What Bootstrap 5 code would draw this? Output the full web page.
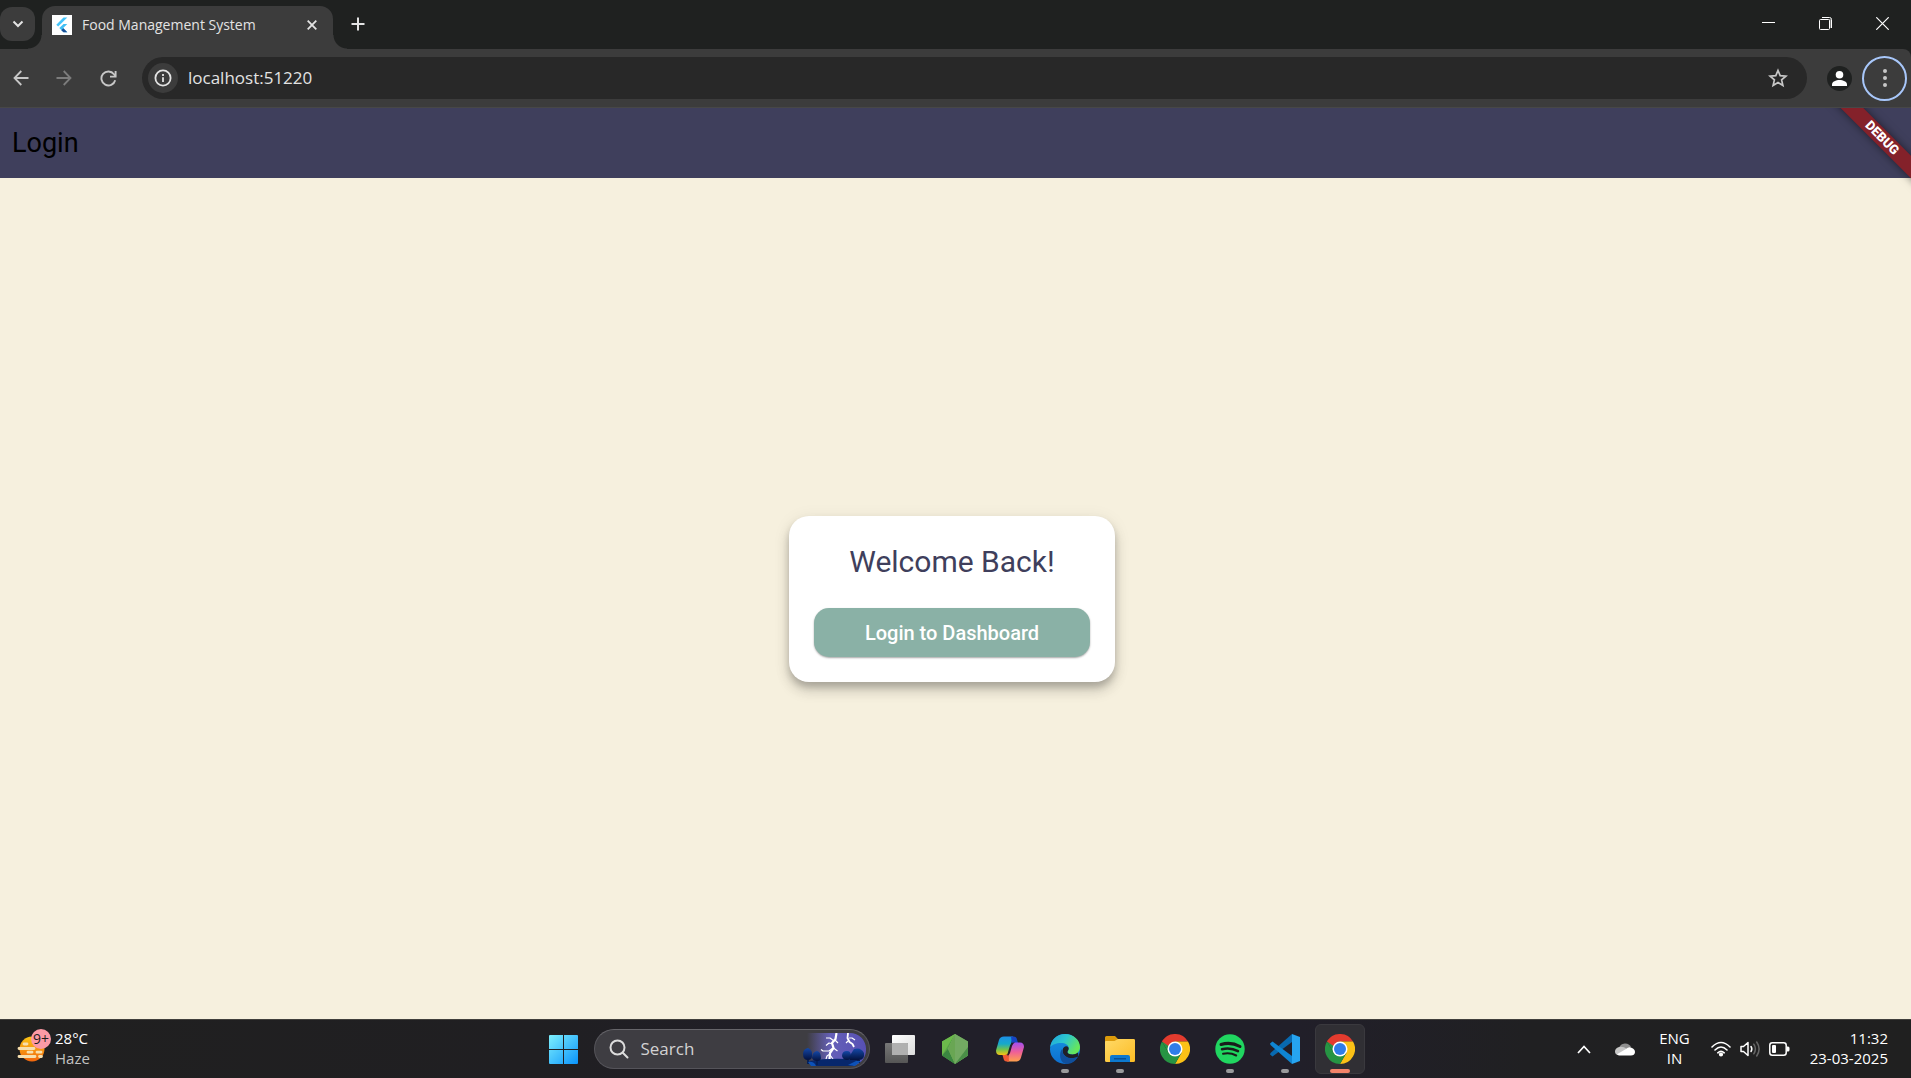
<!DOCTYPE html>
<html lang="en">
<head>
<meta charset="utf-8">
<meta name="viewport" content="width=device-width, initial-scale=1">
<title>Food Management System</title>
<link rel="stylesheet" href="https://cdn.jsdelivr.net/npm/bootstrap@5.3.0/dist/css/bootstrap.min.css">
<style>
  :root { --ui: "Open Sans", "Noto Sans", sans-serif; --chrome: #3c3c3c; --strip: #1f2120; --cream: #f6f0de; --navy: #3f3f5c; }
  body { font-family: var(--ui); background: var(--cream); overflow: hidden; }
  button { color: inherit; }
  svg { display: block; flex: none; }
  .plain-btn { background: none; border: 0; padding: 0; display: flex; align-items: center; justify-content: center; flex: none; }

  /* browser window */
  .tab-strip { background: var(--strip); height: 49px; color: #e3e3e3; }
  .tab-search { width: 35px; height: 34px; margin-top: 7px; border-radius: 12px; background: var(--chrome); }
  .page-tab { position: relative; width: 291px; height: 43px; margin: 6px 0 0 7px; padding: 0 12px 6px 10px; background: var(--chrome); border-radius: 13px 13px 0 0; font-size: 14px; line-height: 20px; }
  .page-tab::before, .page-tab::after { content: ""; position: absolute; bottom: 0; width: 14px; height: 14px; }
  .page-tab::before { right: 100%; background: radial-gradient(circle at 0 0, transparent 13px, var(--chrome) 14px); }
  .page-tab::after { left: 100%; background: radial-gradient(circle at 100% 0, transparent 13px, var(--chrome) 14px); }
  .tab-icon { width: 20px; height: 20px; background: #fff; }
  .tab-title { margin-left: 10px; }
  .new-tab { width: 34px; height: 34px; margin: 7px 0 0 8px; }
  .win-btn { width: 57px; height: 47px; color: #fff; }
  .toolbar-row { background: var(--chrome); height: 59px; padding: 0 4px 0 0; border-bottom: 1px solid #474747; border-top-right-radius: 8px; color: #c7c7c7; }
  .strip-under { background: var(--strip); }
  .nav-btn { width: 45px; height: 40px; }
  .nav-btn:first-child { width: 41px; }
  .omnibox { height: 42px; margin-left: 11px; border-radius: 21px; background: #282828; padding: 0 15px 0 6px; }
  .site-info { width: 30px; height: 30px; border-radius: 50%; background: var(--chrome); color: #e3e3e3; }
  .bare-input { background: none; border: 0; padding: 0; outline: 0; min-width: 0; }
  .address-text { color: #e3e3e3; font-size: 17px; line-height: 24px; margin-left: 10px; }
  .profile-btn { margin: 0 10px 0 20px; }
  .menu-ring { width: 45px; height: 45px; border: 2px solid #a8c7fa; border-radius: 50%; }

  /* page content */
  .app-view { font-family: Roboto, sans-serif; background: var(--cream); }
  .app-bar { height: 70px; padding: 0 12px; background: var(--navy); color: #000; font-size: 27px; line-height: 36px; }
  .ribbon-clip { position: absolute; top: 0; right: 0; width: 86px; height: 86px; overflow: hidden; pointer-events: none; }
  .ribbon-band { position: absolute; left: -13px; top: 22px; width: 140px; height: 16px; transform: rotate(45deg); background: #84212a; color: #fff; font-size: 13px; line-height: 16px; font-weight: 900; text-align: center; box-shadow: 0 0 8px rgba(0,0,0,.5); }
  .login-area { padding-right: 7px; }
  .login-card { padding: 25px; border: 0; border-radius: 20px; box-shadow: 0 5px 6px rgba(0,0,0,.16), 0 9px 14px rgba(0,0,0,.14), 0 3px 18px rgba(0,0,0,.08); }
  .login-title { color: var(--navy); font-size: 30px; line-height: 42px; font-weight: 400; margin-bottom: 25px; }
  .login-btn { width: 276px; height: 49px; border: 0; border-radius: 15px; background: #8ab1a6; color: #fff; font-size: 20px; line-height: 28px; font-weight: 500; padding: 1px 0 0; box-shadow: 0 1px 2px rgba(0,0,0,.35); }
  .login-btn:hover { background: #7ba397; color: #fff; }

  /* taskbar */
  .task-bar { height: 59px; border-top: 1px solid #403f3c; padding: 0 2px 0 15px; color: #fff; font-size: 15px; line-height: 20px; background: linear-gradient(90deg, #202020 0, #201f22 28%, #211f29 45%, #211f29 68%, #202022 80%, #202020 100%); }
  .side-zone { flex: 1 1 0; }
  .two-line { padding-bottom: 2px; }
  .weather-text { color: #c3c3c3; }
  .task-search { width: 276px; height: 40px; border: 1px solid #55545a; border-top-color: #66656a; border-radius: 20px; background: #3e3d42; padding: 0 3px 0 14px; }
  .task-search input { color: #d2d2d2; font-size: 17px; line-height: 24px; width: 120px; margin-left: 12px; }
  .task-search input::placeholder { color: #d2d2d2; opacity: 1; }
  .dock { gap: 5px; }
  .dock-btn { position: relative; width: 50px; height: 50px; border-radius: 6px; }
  .dock-btn.running::after { content: ""; position: absolute; left: 21px; bottom: 1px; width: 8px; height: 4px; border-radius: 2px; background: #9a9a9c; }
  .dock-btn.current { background: #302f34; border: 1px solid #3a393e; }
  .dock-btn.current::after { left: 14px; bottom: 0; width: 20px; background: #f3836a; }
  .tray { padding-right: 21px; }
  .tray-status { margin-left: 21px; gap: 8px; }
</style>
<script src="https://cdn.jsdelivr.net/npm/bootstrap@5.3.0/dist/js/bootstrap.bundle.min.js"></script>
</head>
<body class="d-flex flex-column vh-100">

<svg width="0" height="0" class="position-absolute" aria-hidden="true">
  <defs>
    <linearGradient id="gWin" x1="0" y1="0" x2="1" y2="1"><stop offset="0" stop-color="#7ef0fd"/><stop offset="1" stop-color="#0a93fb"/></linearGradient>
    <linearGradient id="gSun" x1="0" y1="0" x2="0" y2="1"><stop offset="0" stop-color="#fbc515"/><stop offset="1" stop-color="#f2660c"/></linearGradient>
    <linearGradient id="gSky" x1="0" y1="0" x2="1" y2="0"><stop offset="0" stop-color="#6963bd" stop-opacity="0"/><stop offset=".4" stop-color="#6560b8"/><stop offset="1" stop-color="#5750b4"/></linearGradient>
    <linearGradient id="gTree" x1="0" y1="0" x2="0" y2="1"><stop offset="0" stop-color="#1448a8"/><stop offset="1" stop-color="#04123f"/></linearGradient>
    <linearGradient id="gPane" x1="0" y1="0" x2="1" y2="1"><stop offset="0" stop-color="#fff"/><stop offset="1" stop-color="#dcdcdc"/></linearGradient>
    <linearGradient id="gGray" x1="0" y1="0" x2="0" y2="1"><stop offset="0" stop-color="#777"/><stop offset="1" stop-color="#565656"/></linearGradient>
    <linearGradient id="gCopA" x1="0" y1="0" x2="0" y2="1"><stop offset="0" stop-color="#1c8fe8"/><stop offset=".4" stop-color="#16a9c9"/><stop offset=".7" stop-color="#71c24c"/><stop offset="1" stop-color="#f7c414"/></linearGradient>
    <linearGradient id="gCopB" x1="0" y1="0" x2="0" y2="1"><stop offset="0" stop-color="#a24ef0"/><stop offset=".5" stop-color="#ef5f98"/><stop offset="1" stop-color="#ffa04c"/></linearGradient>
    <linearGradient id="gEdgeTop" x1="0" y1="0" x2="1" y2=".5"><stop offset="0" stop-color="#1fa2dc"/><stop offset=".5" stop-color="#2cc6cf"/><stop offset="1" stop-color="#66e65c"/></linearGradient>
    <linearGradient id="gEdgeLow" x1="0" y1="0" x2="0" y2="1"><stop offset="0" stop-color="#1793e0"/><stop offset="1" stop-color="#0d6fd0"/></linearGradient>
    <linearGradient id="gFold" x1="0" y1="0" x2="1" y2="1"><stop offset="0" stop-color="#ffd967"/><stop offset="1" stop-color="#fcbc24"/></linearGradient>
    <symbol id="chromeLogo" viewBox="0 0 30 30">
      <path d="M2 7.5A15 15 0 0 1 28 7.5H15z" fill="#e33b2e"/>
      <path d="M28 7.5A15 15 0 0 1 15 30L21.5 18.8 15 7.5z" fill="#fbc116"/>
      <path d="M15 30A15 15 0 0 1 2 7.5L8.5 18.8 15 22.5 21.5 18.8z" fill="#269443"/>
      <path d="M2 7.5L8.5 18.8 15 7.5z" fill="#269443"/>
      <path d="M2 7.5A15 15 0 0 1 4 5L15 7.5 8.5 12z" fill="#e33b2e"/>
      <circle cx="15" cy="15" r="7.5" fill="#fff"/><circle cx="15" cy="15" r="6" fill="#2f7de9"/>
    </symbol>
  </defs>
</svg>

<header>
  <div class="tab-strip d-flex align-items-start">
    <button class="plain-btn tab-search" aria-label="Search tabs"><svg width="12" height="8" viewBox="0 0 12 8" fill="none" stroke="currentColor" stroke-width="2"><path d="M1.5 1.5L6 6l4.500-4.500"/></svg></button>
    <div class="page-tab d-flex align-items-center">
      <span class="tab-icon"><svg width="20" height="20" viewBox="0 0 20 20"><path d="M11.500 2.500h3.800L6.200 11.600 4.300 9.700z" fill="#45c5fb"/><path d="M11.500 9h3.800l-4.100 4.100 4.100 4.200h-3.800l-4.200-4.200z" fill="#40bff5"/><path d="M9.300 15.200l2-2 4 4.100h-3.800z" fill="#1a4f97"/></svg></span>
      <span class="tab-title me-auto text-nowrap">Food Management System</span>
      <button class="plain-btn p-1" aria-label="Close tab"><svg width="10" height="10" viewBox="0 0 10 10" stroke="currentColor" stroke-width="1.800"><path d="M.7.7l8.600 8.600M9.300.7L.7 9.300"/></svg></button>
    </div>
    <button class="plain-btn new-tab" aria-label="New tab"><svg width="14" height="14" viewBox="0 0 14 14" stroke="currentColor" stroke-width="2"><path d="M7 .5v13M.5 7h13"/></svg></button>
    <div class="ms-auto d-flex">
      <button class="plain-btn win-btn" aria-label="Minimize"><svg width="13" height="13" viewBox="0 0 13 13"><path d="M0 5h13v1H0z" fill="currentColor"/></svg></button>
      <button class="plain-btn win-btn" aria-label="Restore"><svg width="13" height="13" viewBox="0 0 13 13" fill="none" stroke="currentColor"><path d="M3 .5h7.500a2 2 0 0 1 2 2V11"/><path d="M11 2v9" stroke="#999" stroke-width="1.500"/><rect x=".5" y="2.500" width="10" height="10" rx="1"/></svg></button>
      <button class="plain-btn win-btn" aria-label="Close"><svg width="13" height="13" viewBox="0 0 13 13" stroke="currentColor" stroke-width="1.200"><path d="M.3.3l12.400 12.400M12.700.3L.3 12.700"/></svg></button>
    </div>
  </div>
  <div class="strip-under">
    <nav class="toolbar-row d-flex align-items-center" aria-label="Browser">
      <button class="plain-btn nav-btn" aria-label="Back"><svg width="16" height="16" viewBox="0 0 16 16" fill="none" stroke="currentColor" stroke-width="1.800"><path d="M15.500 8H1.800M8.300 1L1.500 8l6.800 7"/></svg></button>
      <button class="plain-btn nav-btn" aria-label="Forward"><svg width="16" height="16" viewBox="0 0 16 16" fill="none" stroke="#7c7c7c" stroke-width="1.800"><path d="M.5 8h13.700M7.700 1l6.800 7-6.800 7"/></svg></button>
      <button class="plain-btn nav-btn" aria-label="Reload"><svg width="17" height="17" viewBox="0 0 17 17" fill="none" stroke="currentColor" stroke-width="1.900"><path d="M15.200 10.200A7 7 0 1 1 14 4.200l1.500 2"/><path d="M15.600 1v5.600H10"/></svg></button>
      <div class="omnibox d-flex align-items-center flex-grow-1">
        <button class="plain-btn site-info" aria-label="View site information"><svg width="18" height="18" viewBox="0 0 18 18" fill="none" stroke="currentColor" stroke-width="1.800"><circle cx="9" cy="9" r="7.600"/><path d="M9 8.200V13M9 5v2"/></svg></button>
        <input class="bare-input address-text flex-grow-1" type="text" value="localhost:51220" aria-label="Address" spellcheck="false">
        <button class="plain-btn p-1" aria-label="Bookmark this tab"><svg width="20" height="20" viewBox="0 0 20 20" fill="none" stroke="currentColor" stroke-width="1.700"><path d="M10 2.500l2.200 5.200 5.700.5-4.300 3.700 1.300 5.500L10 14.500l-4.900 2.900 1.300-5.500-4.300-3.700 5.700-.5z"/></svg></button>
      </div>
      <button class="plain-btn profile-btn" aria-label="Profile"><svg width="25" height="25" viewBox="0 0 25 25"><circle cx="12.500" cy="12.500" r="12.500" fill="#1f2120"/><circle cx="12.500" cy="8.800" r="3.800" fill="#fff"/><path d="M5 20v-1.500c0-3 4-4.500 7.500-4.500s7.500 1.500 7.500 4.500V20z" fill="#fff"/></svg></button>
      <button class="plain-btn menu-ring" aria-label="Menu"><svg width="4" height="18" viewBox="0 0 4 18" fill="currentColor"><circle cx="2" cy="2" r="2"/><circle cx="2" cy="9" r="2"/><circle cx="2" cy="16" r="2"/></svg></button>
    </nav>
  </div>
</header>

<div class="app-view position-relative flex-grow-1 d-flex flex-column">
  <div class="app-bar d-flex align-items-center">Login</div>
  <main class="login-area flex-grow-1 d-flex align-items-center justify-content-center">
    <section class="card login-card">
      <h1 class="login-title text-center">Welcome Back!</h1>
      <button class="btn login-btn" type="button">Login to Dashboard</button>
    </section>
  </main>
  <div class="ribbon-clip"><div class="ribbon-band">DEBUG</div></div>
</div>

<footer class="task-bar d-flex align-items-center">
  <div class="side-zone d-flex align-items-center">
    <svg width="36" height="36" viewBox="0 0 36 36" class="mb-2">
      <circle cx="17" cy="22" r="12.500" fill="url(#gSun)"/>
      <g stroke="#f7dfae" stroke-width="2.800" stroke-linecap="round"><path d="M9 17h3M4 21.500h15M13 25.200h4M22 25.200h4M4 29.500h16M24.500 29.500h2"/></g>
      <circle cx="26" cy="12" r="10" fill="#fc9aa5"/>
      <text x="26" y="17" text-anchor="middle" font-size="14" fill="#1c1c1c" font-family="Open Sans, sans-serif">9+</text>
    </svg>
    <div class="ms-1 two-line d-flex flex-column"><span>28°C</span><span class="weather-text">Haze</span></div>
  </div>

  <div class="dock d-flex align-items-center">
    <button class="plain-btn dock-btn" aria-label="Start"><svg width="29" height="29" viewBox="0 0 29 29" fill="url(#gWin)"><path d="M1 0h13v14H0V1a1 1 0 0 1 1-1zM15 0h13a1 1 0 0 1 1 1v13H15zM0 15h14v14H1a1 1 0 0 1-1-1zM15 15h14v13a1 1 0 0 1-1 1H15z"/></svg></button>
    <label class="task-search d-flex align-items-center">
      <svg width="20" height="20" viewBox="0 0 20 20" fill="none" stroke="#dcdcdc" stroke-width="2" stroke-linecap="round"><circle cx="8.500" cy="8.500" r="7"/><path d="M13.800 13.800l4.700 4.700"/></svg>
      <input class="bare-input" type="search" placeholder="Search" aria-label="Search">
      <svg class="ms-auto" width="64" height="33" viewBox="0 0 64 33">
        <path d="M5 0h43a16 16 0 0 1 16 16.500A16 16 0 0 1 48 33H12L5 26z" fill="url(#gSky)"/>
        <g fill="none" stroke="#fff" stroke-linejoin="round"><path d="M34.500 0l-1 6-3.500 4 1.500 5-3.500 5-.5 6" stroke-width="2.200"/><path d="M46 0l-.500 5 2 4 3 2 1.500 3" stroke-width="1.800"/><path d="M32 8l-4-3h-4M31 11l-4-1-3 2.500M31 15l-4 3h-6l-2-1.500M33 7l3 3M31.500 15l4 3M28 21l-3 2-1 3M28 22l3 4M47 5h3l3 2M46 8l-2 2" stroke-width="1.200"/></g>
        <path d="M7 28q24-4 50-1l-6 6H11z" fill="#07276c"/>
        <g fill="url(#gTree)"><path d="M1 21q0-5 5-6 5 2 4 8 0 4-4 4-5 0-5-6z"/><path d="M10 25q0-6 5-7 4 1 4 7 0 3-4 3t-5-3z"/><path d="M40 23q0-5 5-5 4 0 4 5 0 4-4 4t-5-4z"/><path d="M47 24l5-8q7-2 10 4 1 7-5 7H48z"/></g>
        <path d="M5 27h2v4H5zM14 28h2v4h-2zM55 27h3v3h-3z" fill="#062057"/>
        <path d="M6 29q6-1 8 4H9zM46 32l8-4 5 0-6 5z" fill="#0d52b8"/>
      </svg>
    </label>
    <button class="plain-btn dock-btn" aria-label="Task view"><svg width="30" height="28" viewBox="0 0 30 28"><rect x="7" width="23" height="20" rx="1" fill="url(#gPane)"/><rect y="8" width="23" height="20" rx="1" fill="url(#gGray)"/><path d="M7 8h15a1 1 0 0 1 1 1v11H7z" fill="#b0b0b0"/></svg></button>
    <button class="plain-btn dock-btn" aria-label="MongoDB Compass"><svg width="26" height="30" viewBox="0 0 26 30"><path d="M13 0l13 7.500v14L13 30 0 21.500v-14z" fill="#58a347"/><path d="M13 0L0 7.500v14z" fill="#6cba4b"/><path d="M13 0l7 14.500L13 30 6 15z" fill="#7db26a"/><path d="M13 0l13 7.500v14L13 30z" fill="#73aa62"/><path d="M0 21.500L6 15l7 15z" fill="#3b8741"/><path d="M26 13v8.500L13 30z" fill="#4a8f47"/><path d="M13 0L6 15l7 15z" fill="#69a653"/></svg></button>
    <button class="plain-btn dock-btn" aria-label="Copilot"><svg width="28" height="26" viewBox="0 0 28 26"><path d="M8 .5h9L13 16q-1 3-4 3H4Q0 19 0 14.500L3 4Q4 .5 8 .5z" fill="url(#gCopA)"/><path d="M15 .5h2.500q3 0 3.500 3L22 7h-3q-2 0-3 2z" fill="#1645c4"/><path d="M20 25.500h-9L15 10q1-3.500 4-3.500h5Q28 6.500 28 11l-3 10.500Q24 25.500 20 25.500z" fill="url(#gCopB)"/><path d="M13 25.500h-2.500q-2.500 0-3-3L6.500 19H9q2.500 0 3.500-2z" fill="#ef5a35"/><path d="M14 9.500q1-3 3-3h2q-2 .5-3 3.500l-2 7q-1 2.500-3 2.500z" fill="#251f29"/></svg></button>
    <button class="plain-btn dock-btn running" aria-label="Edge"><svg width="30" height="30" viewBox="0 0 30 30"><circle cx="15" cy="15" r="15" fill="url(#gEdgeLow)"/><path d="M.2 13C1.500 5 7.500 0 15 0c8.500 0 15 6 15 13 0 5-3.500 7.500-7.500 7.500-3.500 0-5-1.200-5-2.500s1.200-1.500 1.200-4C18.700 11 15.500 9 11 9 6 9 2 11 .2 13z" fill="url(#gEdgeTop)"/><path d="M18.700 14c0 2.500-1.200 2.700-1.200 4s1.500 2.500 5 2.500c2 0 4-.7 5.500-2 .5 1.500.3 3 0 4.500-5 3-11 1.500-14-2-2-2.700-2-7 1-8.500q3-1 3.700 1.500z" fill="#201f27"/><path d="M12 15c0 4 3 8.500 8.500 9 3 .2 5.500-.5 7.500-1.500-2 4-6 7.500-12 7.500C9 28 9 19 12 15z" fill="#104f9c"/></svg></button>
    <button class="plain-btn dock-btn running" aria-label="File Explorer"><svg width="30" height="26" viewBox="0 0 30 26"><path d="M0 1.500Q0 0 1.500 0H10l3 3h15.500q1.500 0 1.500 1.500V10H0z" fill="#dc9a0b"/><path d="M0 6q0-1 1-1h8.500L13 3h15.500Q30 3 30 4.500v20q0 1.500-1.500 1.500h-27Q0 26 0 24.500z" fill="url(#gFold)"/><path d="M5 26v-5q0-2 2-2h16q2 0 2 2v5z" fill="#0d78cf"/><path d="M9 22h12v1.500H9z" fill="#074f96"/></svg></button>
    <button class="plain-btn dock-btn" aria-label="Chrome"><svg width="30" height="30"><use href="#chromeLogo"/></svg></button>
    <button class="plain-btn dock-btn running" aria-label="Spotify"><svg width="30" height="30" viewBox="0 0 30 30" fill="none" stroke="#191c1a" stroke-linecap="round"><circle cx="15" cy="15" r="14.700" fill="#20d660" stroke="none"/><path d="M6 10.500q10-3 19 2" stroke-width="3"/><path d="M7 15.200q8.500-2.200 16 2" stroke-width="2.500"/><path d="M8 19.800q7-1.700 13.200 1.700" stroke-width="2"/></svg></button>
    <button class="plain-btn dock-btn running" aria-label="Visual Studio Code"><svg width="30" height="30" viewBox="0 0 30 30"><path d="M0 20.500l2.500 2L22 8V0L.5 19z" fill="#0869b0"/><path d="M0 9.500l2.500-2L22 22v8L.5 11z" fill="#0f85d2"/><path d="M22 0l8 3v24l-8 3z" fill="#26a4f0"/></svg></button>
    <button class="plain-btn dock-btn running current" aria-label="Chrome, active"><svg width="30" height="30"><use href="#chromeLogo"/></svg></button>
  </div>

  <div class="side-zone tray d-flex align-items-center justify-content-end">
    <button class="plain-btn" aria-label="Show hidden icons"><svg width="14" height="9" viewBox="0 0 14 9" fill="none" stroke="#fff" stroke-width="1.700"><path d="M1 8l6-6.500L13 8"/></svg></button>
    <svg class="mx-4" width="20" height="14" viewBox="0 0 20 14"><path d="M4 6a6.500 6.500 0 0 1 12-1l-5 4z" fill="#8e8e8e"/><path d="M4 5q-4 1-4 4.500T4 13l8-6q-4-3-8-2z" fill="#c6c6c6"/><path d="M2 12.200L11 7q3-3 6-1 3 1.300 3 4.200Q19.500 13.500 16 13.500H4q-1.500-.3-2-1.300z" fill="#fff"/></svg>
    <div class="text-center two-line">ENG<br>IN</div>
    <button class="plain-btn tray-status" aria-label="Network, sound and battery">
      <svg width="20" height="16" viewBox="0 0 20 16" fill="none" stroke="#fff" stroke-width="1.600" stroke-linecap="round"><path d="M1 6q9-9 18 0M4 9q6-6 12 0M6.800 11.800q3.200-3 6.400 0"/><circle cx="10" cy="13.500" r="1.300" fill="#fff"/></svg>
      <svg width="22" height="18" viewBox="0 0 22 18" fill="none" stroke="#fff" stroke-width="1.500" stroke-linecap="round"><path d="M2 6.500h2.500L9 2.500v13l-4.500-4H2z" stroke-linejoin="round"/><path d="M12 6.500q1.700 2.500 0 5"/><path d="M14.800 4.200q3.200 4.800 0 9.600M17.700 2q4.800 7 0 14" stroke="#666"/></svg>
      <svg width="21" height="14" viewBox="0 0 21 14"><rect x=".8" y=".8" width="16.400" height="12.400" rx="2.500" fill="none" stroke="#fff" stroke-width="1.500"/><rect x="3" y="3" width="4" height="8" rx="1" fill="#fff"/><path d="M18 4.500h1q1.500 0 1.500 1.500v2q0 1.500-1.500 1.500h-1z" fill="#fff"/></svg>
    </button>
    <div class="ms-3 ps-1 text-end two-line">11:32<br>23-03-2025</div>
  </div>
</footer>
</body>
</html>
